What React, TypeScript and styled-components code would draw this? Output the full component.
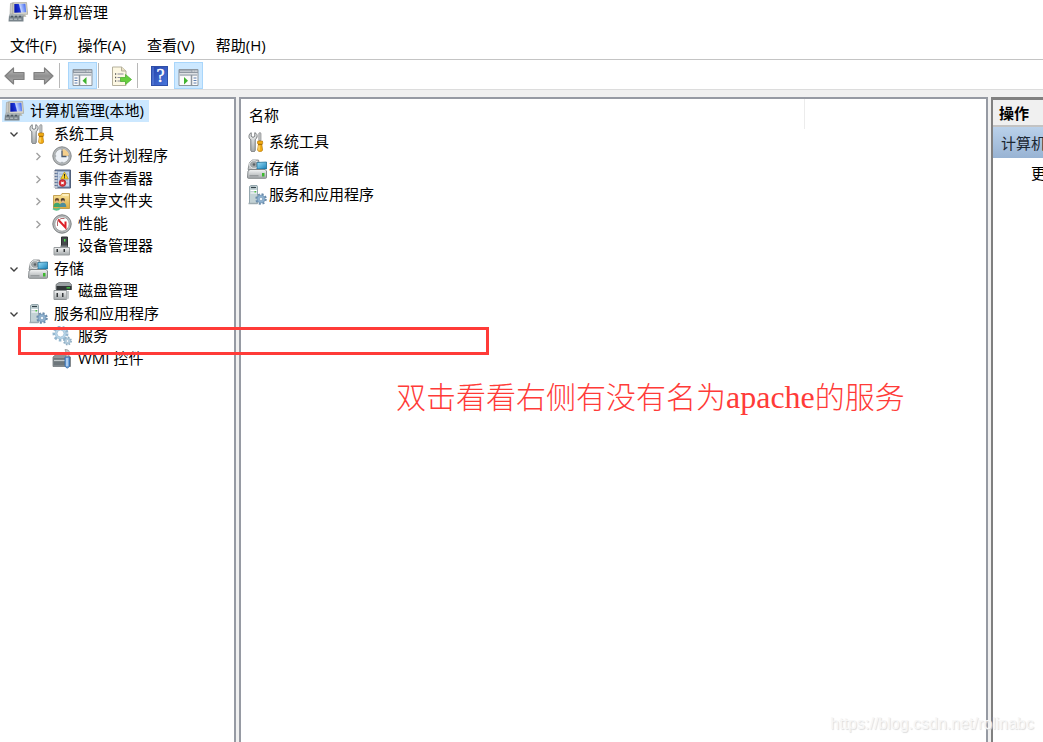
import React from 'react';
import styled, { createGlobalStyle, css } from 'styled-components';

const GlobalStyle = createGlobalStyle`
  * { box-sizing: border-box; }
  body {
    margin: 0;
    background: #fff;
    color: #000;
    font-family: "Open Sans", "Noto Sans CJK SC", sans-serif;
    font-size: 15px;
    line-height: 22px;
  }
  button { font: inherit; color: inherit; }
`;

const Window = styled.div`
  position: relative;
  display: flex;
  flex-direction: column;
  min-height: 100vh;
  overflow: hidden;
`;

const TitleBar = styled.header`
  display: flex;
  align-items: center;
  gap: 5px;
  height: 24px;
  padding-left: 8px;
`;

const Title = styled.h1`
  margin: 0;
  font-size: 15px;
  font-weight: 400;
`;

const MenuBar = styled.nav`
  display: flex;
  align-items: center;
  gap: 21px;
  height: 36px;
  padding: 6px 10px 0;
  border-bottom: 1px solid #c4c4c4;
`;

const MenuItem = styled.button`
  padding: 0;
  border: 0;
  background: none;
  white-space: nowrap;
`;

const ToolBar = styled.div`
  display: flex;
  align-items: center;
  height: 30px;
  padding-top: 2px;
  border-bottom: 1px solid #dcdcdc;
`;

const ToolButton = styled.button<{ $active?: boolean }>`
  display: flex;
  align-items: center;
  justify-content: center;
  width: 29px;
  height: 27px;
  padding: 0;
  border: 1px solid ${(p) => (p.$active ? '#a9d6fb' : 'transparent')};
  background: ${(p) => (p.$active ? '#cce8ff' : 'none')};
`;

const ToolDivider = styled.span<{ $after?: number }>`
  width: 1px;
  height: 25px;
  margin: 0 ${(p) => p.$after ?? 8}px 0 1px;
  background: #b8b8b8;
`;

const Panes = styled.main`
  flex: 1;
  display: grid;
  grid-template-columns: 236px minmax(0, 1fr) 52px;
  gap: 3px;
  padding-top: 7px;
  background: #f0f0f0;
`;

const pane = css`
  background: #fff;
  border: solid #969aa3;
  overflow: hidden;
`;

const TreePane = styled.section`
  ${pane}
  border-width: 2px 2px 0 0;
  padding-top: 1px;
`;

const Tree = styled.ul`
  margin: 0;
  padding: 0;
  list-style: none;
`;

const TreeRow = styled.li<{ $depth: number }>`
  display: flex;
  align-items: center;
  height: 22px;
  padding-left: ${(p) => (p.$depth ? p.$depth * 24 - 20 : 2)}px;
  &:nth-child(even) { height: 23px; }
`;

const Twisty = styled.span`
  display: flex;
  justify-content: center;
  width: 20px;
  margin-right: 4px;
`;

const NodeLabel = styled.span<{ $selected?: boolean }>`
  display: flex;
  align-items: center;
  gap: 6px;
  height: 22px;
  white-space: nowrap;
  ${(p) => p.$selected && 'background: #cce8ff; padding: 0 5px 0 2px;'}
`;

const LabelText = styled.span`
  padding-bottom: 2px;
`;

const ListPane = styled.section`
  ${pane}
  border-width: 2px 2px 0 2px;
`;

const ListTable = styled.table`
  width: 100%;
  border-collapse: collapse;
  table-layout: fixed;
`;

const ColumnHead = styled.th<{ $width?: string }>`
  width: ${(p) => p.$width ?? 'auto'};
  height: 30px;
  padding: 1px 8px 0;
  border-right: ${(p) => (p.$width ? '1px solid #ececec' : '0')};
  font-weight: 400;
  text-align: left;
`;

const ListCell = styled.td`
  height: 26px;
  padding: 0 6px;
  tr:nth-child(even) > & { height: 27px; }
`;

const ListLabel = styled.span`
  display: flex;
  align-items: center;
  gap: 2px;
`;

const ActionsPane = styled.aside`
  ${pane}
  border-color: #808080;
  border-width: 3px 0 0 2px;
`;

const ActionsTitle = styled.h2`
  height: 27px;
  margin: 0;
  padding: 2px 6px;
  background: #f0f0f0;
  border-bottom: 2px solid #c3c3c3;
  font-size: 15px;
  line-height: 22px;
  font-weight: 700;
`;

const ActionsGroup = styled.h3`
  height: 31px;
  margin: 0;
  padding: 0 8px;
  background: linear-gradient(#bad1ea, #98b3d3);
  color: #1c2733;
  font-size: 15px;
  line-height: 32px;
  font-weight: 400;
  white-space: nowrap;
`;

const ActionItem = styled.button`
  display: block;
  height: 30px;
  padding: 0 0 0 38px;
  border: 0;
  background: none;
  white-space: nowrap;
`;

const Highlight = styled.div`
  position: absolute;
  top: 327px;
  left: 18px;
  width: 471px;
  height: 28px;
  border: 3px solid #ff3b38;
  pointer-events: none;
`;

const Note = styled.p`
  position: absolute;
  top: 376px;
  left: 396px;
  margin: 0;
  color: #ff3b38;
  font-family: "Liberation Serif", "Noto Sans CJK SC", serif;
  font-size: 30px;
  font-weight: 300;
  line-height: 42px;
  white-space: nowrap;
`;

const NoteLatin = styled.span`
  font-size: 32px;
`;

const Watermark = styled.span`
  position: absolute;
  right: 9px;
  bottom: 7px;
  color: #f7f7f7;
  text-shadow: 1px 1px 1px #dcdcdc;
  font-family: "Liberation Sans", sans-serif;
  font-size: 16px;
`;

const Svg = ({ children, w = 20, h = 20 }: { children: React.ReactNode; w?: number; h?: number }) => (
  <svg width={w} height={h} viewBox={`0 0 ${w} ${h}`} aria-hidden="true" style={{ flex: 'none' }}>
    {children}
  </svg>
);

const GradientDefs = () => (
  <svg width="0" height="0" style={{ position: 'absolute' }} aria-hidden="true">
    <defs>
      <linearGradient id="metal" x1="0" y1="0" x2="0" y2="1">
        <stop offset="0" stopColor="#f4f5f5" />
        <stop offset="1" stopColor="#a3a8aa" />
      </linearGradient>
      <linearGradient id="screen" x1="0" y1=".2" x2="1" y2="0">
        <stop offset="0" stopColor="#0a1ab0" />
        <stop offset=".35" stopColor="#1c34d8" />
        <stop offset=".45" stopColor="#c3d4ff" />
        <stop offset="1" stopColor="#2a56ee" />
      </linearGradient>
      <linearGradient id="arrow" x1="0" y1="0" x2="0" y2="1">
        <stop offset="0" stopColor="#c2c2c2" />
        <stop offset=".5" stopColor="#8f8f8f" />
        <stop offset="1" stopColor="#b0b0b0" />
      </linearGradient>
      <linearGradient id="book" x1="0" y1="0" x2="1" y2="1">
        <stop offset="0" stopColor="#2240a8" />
        <stop offset="1" stopColor="#4a78de" />
      </linearGradient>
      <linearGradient id="cyan" x1="0" y1="0" x2="1" y2="1">
        <stop offset="0" stopColor="#9ee0f8" />
        <stop offset="1" stopColor="#1680b8" />
      </linearGradient>
      <linearGradient id="folder" x1="0" y1="0" x2="0" y2="1">
        <stop offset="0" stopColor="#fbe6a0" />
        <stop offset="1" stopColor="#dba93c" />
      </linearGradient>
    </defs>
  </svg>
);

const ComputerIcon = () => (
  <Svg>
    <path d="M2.500 1.500 5 .8v10.700l-3 .5z" fill="#c9cac6" stroke="#9d9d98" strokeWidth=".6" />
    <path d="M5 .8 18.500.5l1.200 11.800L5 12.500z" fill="#d9d7cb" stroke="#a3a297" strokeWidth=".7" />
    <path d="m6.300 2 11-.3.9 8.600-11.900.4z" fill="url(#screen)" />
    <path d="m13 12.500 4 0 1.500 2.300h-4z" fill="#b5b3a6" />
    <path d="M1 13.500h14.500v6H.5z" fill="#78838a" />
    <path d="M1.500 12h13.500l.5 2.200H1z" fill="#aab3b6" />
    <path d="M3 13.800h2v1.400H3zm4 0h2v1.400H7zm4 0h2v1.400h-2z" fill="#4d5a63" />
    <path d="M1.800 16.500h3v1.500h-3zm4.300 0h3v1.500h-3zm4.300 0h3v1.500h-3z" fill="#adb6ba" />
  </Svg>
);

const ToolsIcon = () => (
  <Svg>
    <path
      d="M4.200.7v3.600L6 5.400l1.800-1.100V.7C9.600 1.400 10.500 3 10 5c-.3 1.300-1 2-1.800 2.600v10.700c0 1-1 1.500-2.200 1.500s-2.200-.5-2.200-1.500V7.600C2.600 7 2 6 2 4.600 2 2.800 2.800 1.400 4.200.7z"
      fill="url(#metal)" stroke="#777b7d" strokeWidth="1"
    />
    <path d="M11.800 1.200 13 .5l1 .7v7.300h-2.200z" fill="#c6cacc" stroke="#777" strokeWidth=".6" />
    <path d="M10.800 9h4.600l.4 2.200-1 1.300.8 5.500q-.2 1.500-2.500 1.500t-2.500-1.500l.8-5.500-1-1.300z" fill="#f2ac12" stroke="#b87908" strokeWidth=".7" />
    <path d="M12 13.500v5" stroke="#ffe28a" strokeWidth="1.200" />
    <path d="M11 12.300h4.400" stroke="#9a6404" />
  </Svg>
);

const ClockIcon = () => (
  <Svg>
    <circle cx="10" cy="10" r="9.200" fill="#b4b7b9" stroke="#85898b" />
    <circle cx="10" cy="10" r="7.200" fill="#eef2f7" stroke="#a0a4a6" strokeWidth=".8" />
    <path d="M10 10V3a7 7 0 0 1 7 7z" fill="#f5cf8c" />
    <path d="M10 4.500V10.500h4.500" fill="none" stroke="#4a586c" strokeWidth="1.300" />
    <path d="M10 3v1.200M10 15.800V17M3 10h1.200M15.800 10H17" stroke="#808890" />
  </Svg>
);

const EventIcon = () => (
  <Svg>
    <path d="M3 1h15.500v18H3z" fill="#6f86aa" stroke="#52617c" />
    <path d="M6 2.500h11v15H6z" fill="#c7d6ea" />
    <path d="M7 5h9M7 8h9M7 11h9M7 14h9" stroke="#8fa4c4" strokeWidth=".7" />
    <path d="M1.500 3h4M1.500 6h4M1.500 9h4M1.500 12h4M1.500 15h4M1.500 18h4" stroke="#dadde1" strokeWidth="1.300" />
    <path d="m12.500 3 3.800 7H8.700z" fill="#f8d52a" stroke="#b18b0a" strokeWidth=".6" />
    <path d="M12.500 5v2.700M12.500 8.300v1" stroke="#222" />
    <circle cx="10.500" cy="14" r="3.400" fill="#d9343a" stroke="#a41c22" strokeWidth=".6" />
    <path d="m9.300 12.800 2.400 2.400m0-2.400-2.400 2.400" stroke="#fff" strokeWidth="1.200" />
  </Svg>
);

const SharedFolderIcon = () => (
  <Svg>
    <path d="M1.500 4.500h7l1.500-2h7.500v15h-16z" fill="url(#folder)" stroke="#b9903a" strokeWidth=".8" />
    <path d="M10.500 4h6" stroke="#fff4c8" strokeWidth="1.500" />
    <circle cx="5" cy="9" r="2.100" fill="#6b4a2a" />
    <circle cx="10.800" cy="9" r="2.100" fill="#49392b" />
    <path d="M3.800 9.500h2.600v2.300H3.800zm5.800 0h2.600v2.300H9.600z" fill="#e7b78b" />
    <path d="M1.500 16q0-4.300 3.500-4.300T8.500 16z" fill="#3fa66b" />
    <path d="M7.500 16q0-4.300 3.400-4.300t3.400 4.300z" fill="#4f8d9c" />
    <path d="M1 17.500q4 2.500 7-.5" fill="none" stroke="#5cc08a" strokeWidth="2" />
  </Svg>
);

const GaugeIcon = () => (
  <Svg>
    <circle cx="10" cy="10" r="9.200" fill="#b9bcbd" stroke="#7b7f81" />
    <circle cx="10" cy="10" r="7.200" fill="#fff" stroke="#95999b" strokeWidth=".8" />
    <path d="m6 5.500 7.500 8V7.500" fill="none" stroke="#de1f26" strokeWidth="2" />
    <path d="M5.500 12V7.500L9 4.500h3.500" fill="none" stroke="#a85a5c" strokeWidth=".9" />
  </Svg>
);

const DeviceIcon = () => (
  <Svg>
    <path d="M9.500 1h6v10h-6z" fill="#45494c" stroke="#2e3133" />
    <path d="M12 3h1.500v2.500H12z" fill="#4ae04a" />
    <path d="M8.500 9.500h7V13h-7z" fill="#777c7f" />
    <path d="M2 11.500h15.500v7.500H2z" fill="url(#metal)" stroke="#9a9ea0" />
    <path d="M4.500 13H6v3H4.500zm7 0H13v3h-1.500z" fill="#303436" />
  </Svg>
);

const StorageIcon = () => (
  <Svg>
    <path d="m2.500 3.500 3-2.500h6l2 9.500H1z" fill="#c3c7c9" stroke="#777c7e" strokeWidth=".8" />
    <ellipse cx="7" cy="5.500" rx="4.500" ry="3.800" fill="#a0a6a8" stroke="#e5e8e8" />
    <circle cx="7" cy="5.500" r="1.300" fill="#5c6367" />
    <path d="m10 3.500 9.500-.5v7H10z" fill="url(#cyan)" stroke="#116189" strokeWidth=".7" />
    <path d="m1 12 2-1.500h15l1.500 1.500v6.500q0 .8-1 .8H1.500q-1 0-1-.8z" fill="url(#metal)" stroke="#7b8082" strokeWidth=".9" />
    <path d="M2.500 16.800h9" stroke="#868b8d" />
    <path d="M15 14h2.500v3.500H15z" fill="#3cb82f" />
  </Svg>
);

const DiskIcon = () => (
  <Svg>
    <path d="m4 3.500 3-2h10.500l2 2v5H4z" fill="#9ca1a4" stroke="#64686a" strokeWidth=".7" />
    <path d="M4.500 5h15v4h-15z" fill="#323638" />
    <path d="M14.500 6.200h3.500v1.300h-3.500z" fill="#40d340" />
    <path d="M2 9.500h12.500v9H2z" fill="url(#metal)" stroke="#909597" />
    <path d="M4.500 12H6v4H4.500zm5.500 0h1.500v4H10z" fill="#363a3c" />
    <path d="M14.500 10h2.500v7.500l-2.500 1z" fill="#c4c8c9" />
  </Svg>
);

type GearProps = { cx: number; cy: number; r: number; fill: string; hole?: string; dash: string; edge: string };

const Gear = ({ cx, cy, r, fill, hole = '#fff', dash, edge }: GearProps) => (
  <g>
    <circle cx={cx} cy={cy} r={r} fill="none" stroke={edge} strokeWidth={r * 0.45} strokeDasharray={dash} />
    <circle cx={cx} cy={cy} r={r * 0.85} fill={fill} stroke={edge} strokeWidth=".6" />
    <circle cx={cx} cy={cy} r={r * 0.36} fill={hole} stroke={edge} strokeWidth=".5" />
  </g>
);

const ServerIcon = () => (
  <Svg>
    <path d="M2.500 1.500 4 .5h6l.5 1v17h-8z" fill="#c3d2d5" stroke="#8397a0" strokeWidth=".8" />
    <path d="M4 2.500h5" stroke="#33434a" strokeWidth="1.200" />
    <path d="M3.500 5.500h6.500M3.500 8h6.500" stroke="#fff" />
    <path d="M7.500 6h1.500v1.500H7.500z" fill="#50c746" />
    <path d="M1.500 18.500h9" stroke="#9dabb0" strokeWidth="1.500" />
    <Gear cx={14} cy={14} r={4.7} fill="#8db1cf" hole="#eaf3fa" dash="2 1.69" edge="#6a8cab" />
  </Svg>
);

const GearsIcon = () => (
  <Svg>
    <Gear cx={8.5} cy={7.5} r={6.5} fill="#b9d7ea" dash="2.5 2.05" edge="#93b6cf" />
    <circle cx="8.500" cy="7.500" r="3.500" fill="#fff" stroke="#93b6cf" strokeWidth=".7" />
    <Gear cx={15.5} cy={15} r={3.6} fill="#b5cfe0" dash="1.5 1.33" edge="#8cabc1" />
  </Svg>
);

const WmiIcon = () => (
  <Svg>
    <path d="m1 8 3-2.500h11L18.500 8v9.500H1z" fill="#8e9699" stroke="#72797c" strokeWidth=".8" />
    <path d="M1.500 9h12v7.500h-12z" fill="#6e777c" />
    <path d="M2 11.500h11" stroke="#c3c9cb" strokeWidth="1.300" />
    <path d="M13 .5q5 0 4.300 4L16.500 8h-3l1-3z" fill="#c9cccd" stroke="#888" strokeWidth=".7" />
    <path d="M13 8h4.500v9q-2.200 4-4.500 0z" fill="#73a5dc" stroke="#386dab" strokeWidth=".9" />
    <path d="M15 9v8" stroke="#d3e6fa" strokeWidth="1.200" />
  </Svg>
);

const ArrowIcon = ({ forward }: { forward?: boolean }) => (
  <Svg w={21}>
    <path
      d={forward ? 'M20 10 11.500 2v4.500H1v7h10.500V18z' : 'M1 10 9.500 2v4.500H20v7H9.500V18z'}
      fill="url(#arrow)" stroke="#808080" strokeWidth="1.200" strokeLinejoin="round"
    />
  </Svg>
);

const PanelIcon = ({ right }: { right?: boolean }) => (
  <Svg w={21}>
    <path d="M1 3.500h19v16H1z" fill="#fbfbfb" stroke="#8d959d" />
    <path d="M1 3.500h19V7H1z" fill="#8f98a2" />
    <path d="M2 5.200h11.500" stroke="#d5dae0" />
    <path d="M14.500 5.200h1.200M16.500 5.200h1.200M18.300 5.200h1" stroke="#fff" strokeWidth="1.200" />
    <path d="M1.500 8.800h18" stroke="#b9c0c7" strokeWidth="2.500" />
    {right ? (
      <g>
        <path d="M13.500 9v10" stroke="#8d959d" strokeWidth="1.500" />
        <path d="M15.500 12h3M15.500 14.500h3M15.500 17h3" stroke="#5f7fb0" strokeWidth="1.200" />
        <path d="m6 11 4 3.700-4 3.700z" fill="#3fb32f" />
      </g>
    ) : (
      <g>
        <path d="M7.500 9v10" stroke="#8d959d" strokeWidth="1.500" />
        <path d="M2.500 12h3M2.500 14.500h3M2.500 17h3" stroke="#5f7fb0" strokeWidth="1.200" />
        <path d="m14.500 11-4 3.700 4 3.700z" fill="#3fb32f" />
      </g>
    )}
  </Svg>
);

const ExportIcon = () => (
  <Svg w={21}>
    <path d="M1.500 1h9l4.500 4v14.500H1.500z" fill="#fdf8e3" stroke="#b5b09c" />
    <path d="M10.500 1v4H15" fill="#e9e2c4" stroke="#b5b09c" />
    <path d="M4 8h1.200M4 11.500h1.200M4 15h1.200" stroke="#555" strokeWidth="1.300" />
    <path d="M6.500 8h6M6.500 11.500h3M6.500 15h5" stroke="#8a8a9a" />
    <path d="m20.500 13.500-6-5v3H9.500v4h5v3z" fill="#67cf3d" stroke="#4fae35" strokeWidth=".8" />
  </Svg>
);

const HelpIcon = () => (
  <Svg w={17}>
    <rect x=".5" y=".5" width="16" height="19" fill="url(#book)" stroke="#2f4fa8" />
    <path d="M2 1v18" stroke="#6387de" />
    <text x="9.500" y="16" textAnchor="middle" fontFamily="Liberation Serif, serif" fontSize="18" fill="#fff" stroke="#fff" strokeWidth=".4">?</text>
  </Svg>
);

const Chevron = ({ open }: { open?: boolean }) => (
  <Svg w={10} h={10}>
    <path
      d={open ? 'M1.500 3.500 5 7 8.500 3.500' : 'M3.500 2 7 5.500 3.500 9'}
      fill="none" stroke={open ? '#404040' : '#a0a0a0'} strokeWidth="1.400"
    />
  </Svg>
);

type Node = { label: string; depth: number; Icon: React.ComponentType; open?: boolean };

const nodes: Node[] = [
  { label: '计算机管理(本地)', depth: 0, Icon: ComputerIcon },
  { label: '系统工具', depth: 1, Icon: ToolsIcon, open: true },
  { label: '任务计划程序', depth: 2, Icon: ClockIcon, open: false },
  { label: '事件查看器', depth: 2, Icon: EventIcon, open: false },
  { label: '共享文件夹', depth: 2, Icon: SharedFolderIcon, open: false },
  { label: '性能', depth: 2, Icon: GaugeIcon, open: false },
  { label: '设备管理器', depth: 2, Icon: DeviceIcon },
  { label: '存储', depth: 1, Icon: StorageIcon, open: true },
  { label: '磁盘管理', depth: 2, Icon: DiskIcon },
  { label: '服务和应用程序', depth: 1, Icon: ServerIcon, open: true },
  { label: '服务', depth: 2, Icon: GearsIcon },
  { label: 'WMI 控件', depth: 2, Icon: WmiIcon },
];

const items = [
  { label: '系统工具', Icon: ToolsIcon },
  { label: '存储', Icon: StorageIcon },
  { label: '服务和应用程序', Icon: ServerIcon },
];

export default function App() {
  return (
    <Window>
      <GlobalStyle />
      <GradientDefs />
      <TitleBar>
        <ComputerIcon />
        <Title>计算机管理</Title>
      </TitleBar>
      <MenuBar>
        {['文件(F)', '操作(A)', '查看(V)', '帮助(H)'].map((m) => (
          <MenuItem key={m}>{m}</MenuItem>
        ))}
      </MenuBar>
      <ToolBar>
        <ToolButton aria-label="后退"><ArrowIcon /></ToolButton>
        <ToolButton aria-label="前进"><ArrowIcon forward /></ToolButton>
        <ToolDivider />
        <ToolButton $active aria-label="显示/隐藏控制台树"><PanelIcon /></ToolButton>
        <ToolDivider />
        <ToolButton aria-label="导出列表"><ExportIcon /></ToolButton>
        <ToolDivider $after={7} />
        <ToolButton aria-label="帮助"><HelpIcon /></ToolButton>
        <ToolButton $active aria-label="显示/隐藏操作窗格"><PanelIcon right /></ToolButton>
      </ToolBar>
      <Panes>
        <TreePane>
          <Tree role="tree">
            {nodes.map(({ label, depth, Icon, open }) => (
              <TreeRow key={label} $depth={depth} role="treeitem" aria-level={depth + 1} aria-expanded={open}>
                {depth > 0 && <Twisty>{open !== undefined && <Chevron open={open} />}</Twisty>}
                <NodeLabel $selected={depth === 0}>
                  <Icon />
                  <LabelText>{label}</LabelText>
                </NodeLabel>
              </TreeRow>
            ))}
          </Tree>
        </TreePane>
        <ListPane>
          <ListTable>
            <thead>
              <tr>
                <ColumnHead $width="563px" scope="col">名称</ColumnHead>
                <ColumnHead as="td" />
              </tr>
            </thead>
            <tbody>
              {items.map(({ label, Icon }) => (
                <tr key={label}>
                  <ListCell>
                    <ListLabel>
                      <Icon />
                      <LabelText>{label}</LabelText>
                    </ListLabel>
                  </ListCell>
                </tr>
              ))}
            </tbody>
          </ListTable>
        </ListPane>
        <ActionsPane>
          <ActionsTitle>操作</ActionsTitle>
          <ActionsGroup>计算机</ActionsGroup>
          <ActionItem>更</ActionItem>
        </ActionsPane>
      </Panes>
      <Highlight />
      <Note>
        双击看看右侧有没有名为<NoteLatin>apache</NoteLatin>的服务
      </Note>
      <Watermark>https://blog.csdn.net/rolinabc</Watermark>
    </Window>
  );
}
